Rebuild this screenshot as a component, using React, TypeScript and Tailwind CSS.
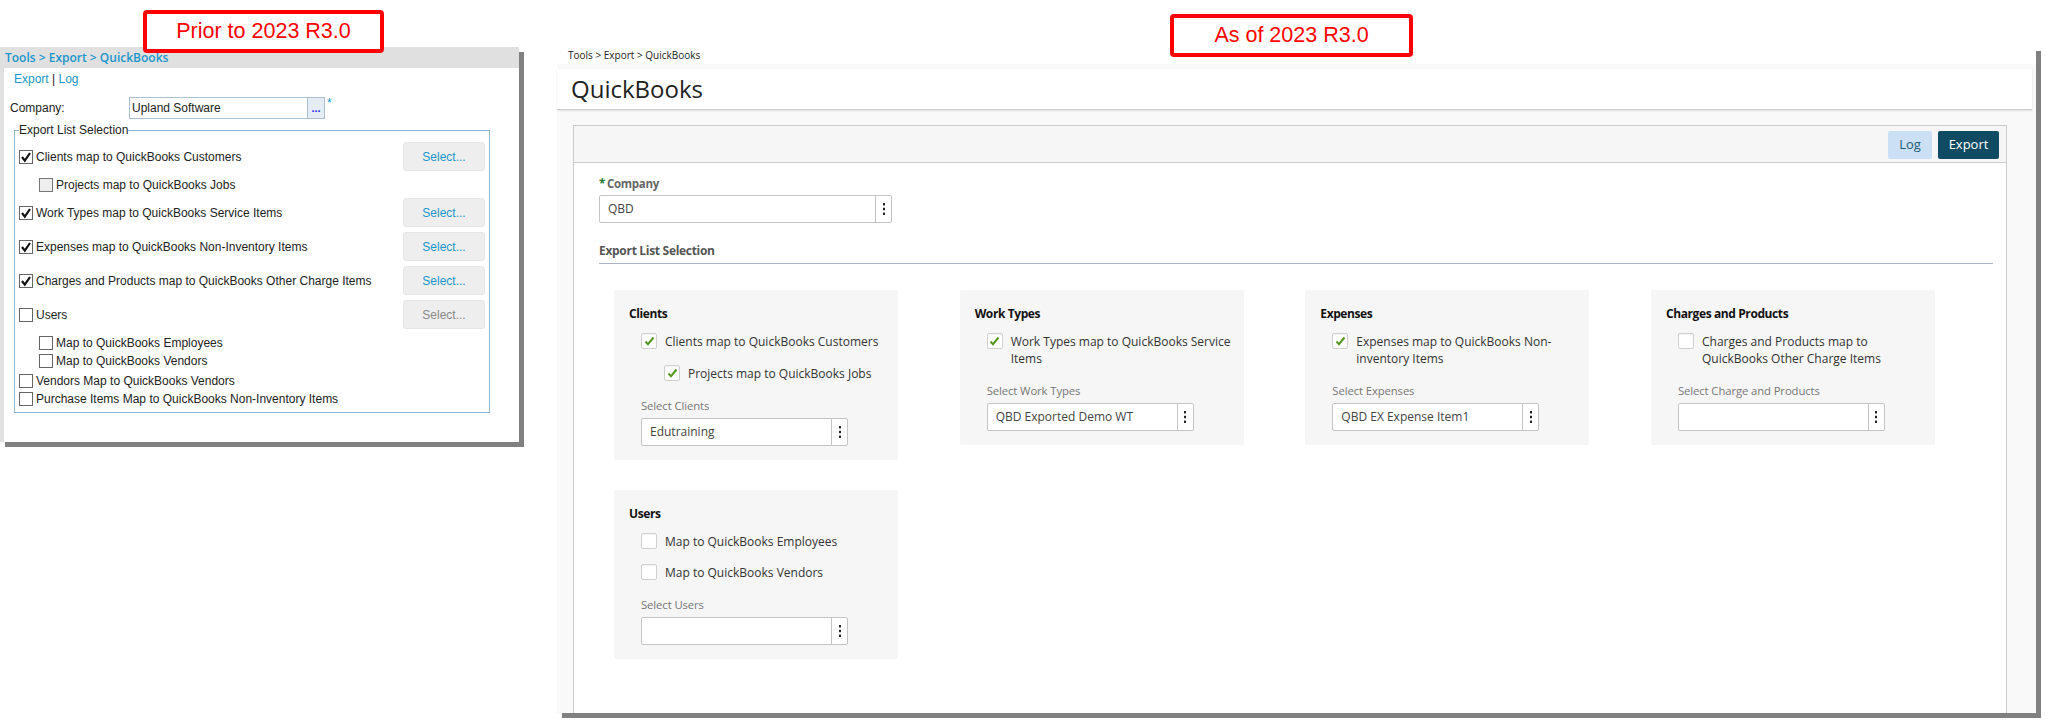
import React from "react";

const Dots = () => (
  <svg width="4" height="14" viewBox="0 0 4 14" aria-hidden="true">
    <rect x="1" y="1" width="2" height="2.4" fill="#222" />
    <rect x="1" y="5.8" width="2" height="2.4" fill="#222" />
    <rect x="1" y="10.6" width="2" height="2.4" fill="#222" />
  </svg>
);

const Picker = ({ value, w }: { value?: string; w: string }) => (
  <div className={`flex h-[28px] ${w} rounded-[2px] border border-[#c4c4c4] bg-white`}>
    <div className="flex flex-1 items-center pl-[8px] text-[12px] text-[#444]">{value}</div>
    <div className="flex w-[16px] items-center justify-center border-l border-[#c4c4c4]">
      <Dots />
    </div>
  </div>
);

const NewCheck = ({ on }: { on?: boolean }) => (
  <span className="flex h-[16px] w-[16px] shrink-0 items-center justify-center rounded-[2px] border border-[#d0d0d0] bg-white shadow-[inset_0_1px_1px_rgba(0,0,0,0.05)]">
    {on && (
      <svg width="11" height="10" viewBox="0 0 11 10" aria-hidden="true">
        <path d="M1.5 5.5 L4 8.2 L9.5 1.5" fill="none" stroke="#55981f" strokeWidth="2" />
      </svg>
    )}
  </span>
);

const NewRow = ({ on, children, indent, top }: { on?: boolean; children: React.ReactNode; indent?: boolean; top: string }) => (
  <div className={`flex gap-[8px] ${top} ${indent ? "ml-[23px]" : ""}`}>
    <NewCheck on={on} />
    <span className="text-[12px] leading-[17px] text-[#333]">{children}</span>
  </div>
);

const Card = ({ title, select, value, children }: { title: string; select: string; value?: string; children: React.ReactNode }) => (
  <div className="w-[284px] rounded-[2px] bg-[#f6f6f6] pb-[14px] pl-[15px] pt-[15px]">
    <div className="text-[12px] font-bold leading-[18px] tracking-[-0.4px] text-[#111]">{title}</div>
    <div className="pl-[12px]">
      {children}
      <div className="mt-[16px] text-[11.3px] leading-[16px] tracking-[-0.1px] text-[#777]">{select}</div>
      <div className="mt-[4px]">
        <Picker value={value} w="w-[207px]" />
      </div>
    </div>
  </div>
);

const OldCheck = ({ on }: { on?: boolean }) => (
  <span className="flex h-[14px] w-[14px] shrink-0 items-center justify-center border border-[#666] bg-white">
    {on && (
      <svg width="12" height="12" viewBox="0 0 12 12" aria-hidden="true">
        <path d="M2 6 L4.8 9.6 L10 2" fill="none" stroke="#111" strokeWidth="2.2" />
      </svg>
    )}
  </span>
);

const OldRow = ({ on, label, select, h, disabled, nested, grey, mt }: { on?: boolean; label: string; select?: boolean; h: string; disabled?: boolean; nested?: boolean; grey?: boolean; mt?: string }) => (
  <div className={`flex items-center ${h} ${mt ?? ""} ${nested ? "pl-[24px]" : "pl-[4px]"} pr-[4px]`}>
    {grey ? <span className="h-[14px] w-[14px] shrink-0 border border-[#777] bg-[#eeeeee]" /> : <OldCheck on={on} />}
    <span className="ml-[3px] flex-1 text-[12px] text-[#222]">{label}</span>
    {select && (
      <span className={`flex h-[29px] w-[82px] items-center justify-center rounded-[3px] border border-[#e6e6e6] bg-[#eeeeee] text-[12px] ${disabled ? "text-[#888]" : "text-[#1a96cc]"}`}>
        Select...
      </span>
    )}
  </div>
);

export default function App() {
  return (
    <div className="relative flex h-[723px] w-[2046px] items-start overflow-hidden bg-white">
      <div className="absolute left-[143px] top-[10px] z-10 flex h-[43px] w-[241px] items-center justify-center rounded-[4px] border-[4px] border-[#ff0000] bg-white font-['Liberation_Sans',sans-serif] text-[21.5px] text-[#ff0000]">
        Prior to 2023 R3.0
      </div>
      <div className="absolute left-[1170px] top-[14px] z-10 flex h-[43px] w-[243px] items-center justify-center rounded-[4px] border-[4px] border-[#ff0000] bg-white font-['Liberation_Sans',sans-serif] text-[21.5px] text-[#ff0000]">
        As of 2023 R3.0
      </div>

      {/* Old screen */}
      <div className="mt-[47px] flex h-[395px] w-[519px] shrink-0 flex-col border-l-[4px] border-[#e0e0e0] bg-white font-['Liberation_Sans',sans-serif] shadow-[5px_5px_0_#808080]">
        <div className="-ml-[4px] flex h-[21px] items-center bg-[#e0e0e0] pl-[5px] font-['Open_Sans',sans-serif] text-[12px] font-semibold text-[#1a96cc]">
          Tools &gt; Export &gt; QuickBooks
        </div>
        <div className="ml-[10px] mt-[4px] text-[12px] leading-[14px] text-[#222]">
          <span className="text-[#1a96cc]">Export</span> | <span className="text-[#1a96cc]">Log</span>
        </div>
        <div className="mt-[11px] flex items-center pl-[6px]">
          <span className="w-[119px] text-[12px] text-[#222]">Company:</span>
          <div className="flex h-[22px] w-[179px] items-center border border-[#a9c1d3] bg-white pl-[2px] text-[12px] text-[#222]">Upland Software</div>
          <div className="flex h-[22px] w-[17px] items-center justify-center border border-l-0 border-[#a9c1d3] bg-[#e4ecf5] text-[11px] font-bold leading-[21px] text-[#1a2be0]">...</div>
          <span className="-mt-[10px] ml-[2px] text-[12px] leading-[12px] text-[#1a96cc]">*</span>
        </div>
        <fieldset className="ml-[10px] mt-[3px] w-[476px] border border-[#8fb8d0] pb-[4px]">
          <legend className="ml-[4px] text-[12px] leading-[16px] text-[#222]">Export List Selection</legend>
          <div className="pt-[4px]">
            <OldRow on label="Clients map to QuickBooks Customers" select h="h-[29px]" />
            <OldRow grey nested label="Projects map to QuickBooks Jobs" h="h-[27px]" />
            <OldRow on label="Work Types map to QuickBooks Service Items" select h="h-[29px]" />
            <OldRow on label="Expenses map to QuickBooks Non-Inventory Items" select h="h-[29px]" mt="mt-[5px]" />
            <OldRow on label="Charges and Products map to QuickBooks Other Charge Items" select h="h-[29px]" mt="mt-[5px]" />
            <OldRow label="Users" select disabled h="h-[29px]" mt="mt-[5px]" />
            <OldRow nested label="Map to QuickBooks Employees" h="h-[18px]" mt="mt-[5px]" />
            <OldRow nested label="Map to QuickBooks Vendors" h="h-[18px]" />
            <OldRow label="Vendors Map to QuickBooks Vendors" h="h-[18px]" mt="mt-[2px]" />
            <OldRow label="Purchase Items Map to QuickBooks Non-Inventory Items" h="h-[18px]" />
          </div>
        </fieldset>
      </div>

      {/* New screen */}
      <div className="ml-[38px] mt-[46px] flex h-[667px] w-[1479px] shrink-0 flex-col bg-[#f9f9f9] font-['Open_Sans',sans-serif] shadow-[5px_5px_0_#808080]">
        <div className="flex h-[18px] items-center bg-white pl-[11px] text-[10px] text-[#222]">Tools &gt; Export &gt; QuickBooks</div>
        <div className="mt-[5px] flex h-[41px] w-[1475px] items-center border-b border-[#cccccc] bg-white pl-[14px] text-[24px] text-[#222] shadow-[0_1px_2px_rgba(0,0,0,0.1)]">
          QuickBooks
        </div>
        <div className="ml-[16px] mt-[15px] flex w-[1434px] flex-1 flex-col border border-b-0 border-[#cccccc] bg-white">
          <div className="flex h-[37px] items-start justify-end gap-[6px] border-b border-[#cccccc] bg-[#f6f6f6] pr-[7px] pt-[5px]">
            <span className="flex h-[28px] w-[44px] items-center justify-center rounded-[2px] bg-[#cce0f5] text-[13px] text-[#1f5c78]">Log</span>
            <span className="flex h-[28px] w-[61px] items-center justify-center rounded-[2px] bg-[#0f4c63] text-[13px] text-white">Export</span>
          </div>
          <div className="pl-[25px] pr-[13px]">
            <div className="mt-[12px] flex h-[17px] items-center text-[11.5px] font-bold tracking-[-0.3px] text-[#666]">
              <span className="mr-[2px] font-bold text-[#1f7a30]">*</span>Company
            </div>
            <div className="mt-[3px]">
              <Picker value="QBD" w="w-[293px]" />
            </div>
            <div className="mt-[19px] border-b border-[#a8b2cc] pb-[3px] text-[12px] font-bold leading-[18px] tracking-[-0.3px] text-[#555]">Export List Selection</div>
            <div className="mt-[26px] grid grid-cols-[repeat(4,284px)] items-start gap-x-[61.67px] gap-y-[30px] pl-[15px]">
              <Card title="Clients" select="Select Clients" value="Edutraining">
                <NewRow on top="mt-[10px]">Clients map to QuickBooks Customers</NewRow>
                <NewRow on indent top="mt-[15px]">Projects map to QuickBooks Jobs</NewRow>
              </Card>
              <Card title="Work Types" select="Select Work Types" value="QBD Exported Demo WT">
                <NewRow on top="mt-[10px]">Work Types map to QuickBooks Service Items</NewRow>
              </Card>
              <Card title="Expenses" select="Select Expenses" value="QBD EX Expense Item1">
                <NewRow on top="mt-[10px]">Expenses map to QuickBooks Non-inventory Items</NewRow>
              </Card>
              <Card title="Charges and Products" select="Select Charge and Products">
                <NewRow top="mt-[10px]">Charges and Products map to QuickBooks Other Charge Items</NewRow>
              </Card>
              <Card title="Users" select="Select Users">
                <NewRow top="mt-[10px]">Map to QuickBooks Employees</NewRow>
                <NewRow top="mt-[14px]">Map to QuickBooks Vendors</NewRow>
              </Card>
            </div>
          </div>
        </div>
      </div>
    </div>
  );
}
